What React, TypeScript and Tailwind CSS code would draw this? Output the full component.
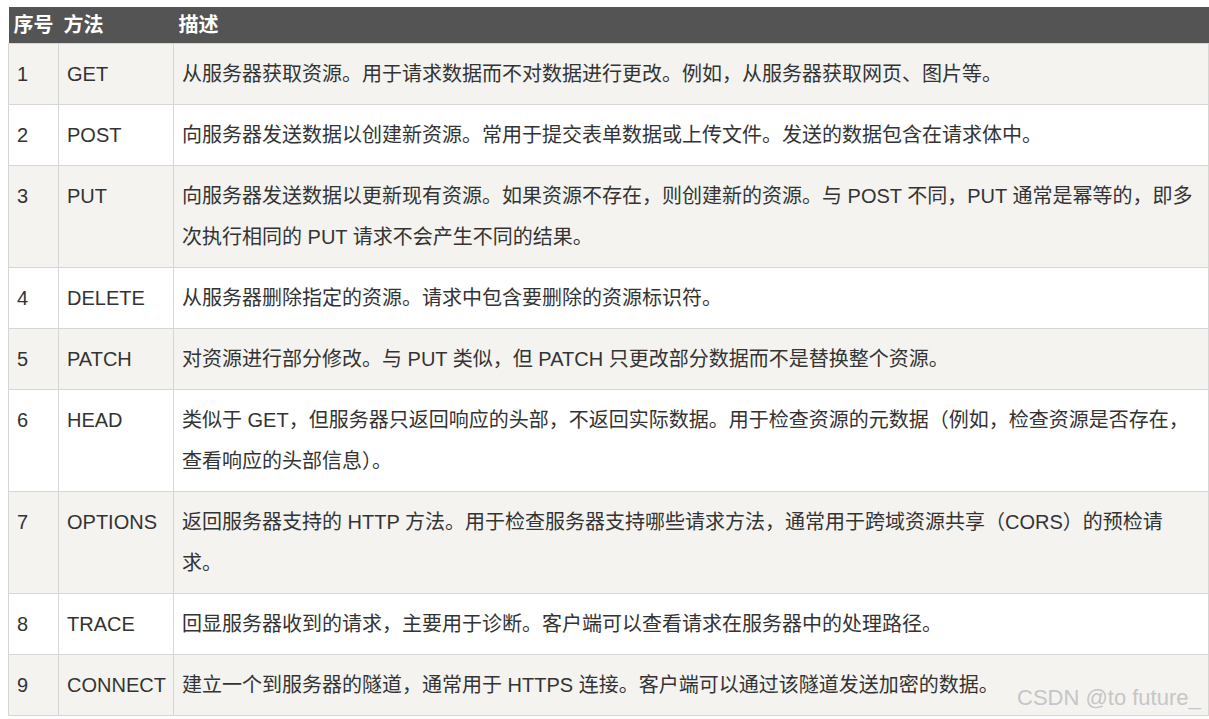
const rows: [string, string, string][] = [
  ["1", "GET", "从服务器获取资源。用于请求数据而不对数据进行更改。例如，从服务器获取网页、图片等。"],
  ["2", "POST", "向服务器发送数据以创建新资源。常用于提交表单数据或上传文件。发送的数据包含在请求体中。"],
  ["3", "PUT", "向服务器发送数据以更新现有资源。如果资源不存在，则创建新的资源。与 POST 不同，PUT 通常是幂等的，即多次执行相同的 PUT 请求不会产生不同的结果。"],
  ["4", "DELETE", "从服务器删除指定的资源。请求中包含要删除的资源标识符。"],
  ["5", "PATCH", "对资源进行部分修改。与 PUT 类似，但 PATCH 只更改部分数据而不是替换整个资源。"],
  ["6", "HEAD", "类似于 GET，但服务器只返回响应的头部，不返回实际数据。用于检查资源的元数据（例如，检查资源是否存在，查看响应的头部信息）。"],
  ["7", "OPTIONS", "返回服务器支持的 HTTP 方法。用于检查服务器支持哪些请求方法，通常用于跨域资源共享（CORS）的预检请求。"],
  ["8", "TRACE", "回显服务器收到的请求，主要用于诊断。客户端可以查看请求在服务器中的处理路径。"],
  ["9", "CONNECT", "建立一个到服务器的隧道，通常用于 HTTPS 连接。客户端可以通过该隧道发送加密的数据。"],
];

export default function App() {
  return (
    <div className="relative min-h-[719px] w-[1209px] bg-white pl-2 pt-[7px] font-['Liberation_Sans','Noto_Sans_CJK_SC',sans-serif] text-[20px] text-[#333]">
      <table className="w-[1201px] table-fixed border-collapse">
        <colgroup>
          <col className="w-[50px]" />
          <col className="w-[115px]" />
          <col />
        </colgroup>
        <thead>
          <tr className="h-9 bg-[#545454] text-left font-bold text-white">
            <th className="px-[5px] leading-9">序号</th>
            <th className="px-[5px] leading-9">方法</th>
            <th className="px-[5px] leading-9">描述</th>
          </tr>
        </thead>
        <tbody>
          {rows.map(([no, method, desc], i) => (
            <tr key={no} className={i % 2 === 0 ? "bg-[#f4f3f0]" : "bg-white"}>
              <td className="border border-[#d6d6d6] px-2 pt-[10px] pb-[9px] align-top leading-[41px]">{no}</td>
              <td className="border border-[#d6d6d6] px-2 pt-[10px] pb-[9px] align-top leading-[41px]">{method}</td>
              <td className="border border-[#d6d6d6] px-2 pt-[10px] pb-[9px] align-top leading-[41px]">{desc}</td>
            </tr>
          ))}
        </tbody>
      </table>
      {/* watermark */}
      <div className="absolute left-[1017px] top-[683px] text-[22px] leading-[30px] text-[#c6c6c6] whitespace-nowrap">
        CSDN @to future_
      </div>
    </div>
  );
}
